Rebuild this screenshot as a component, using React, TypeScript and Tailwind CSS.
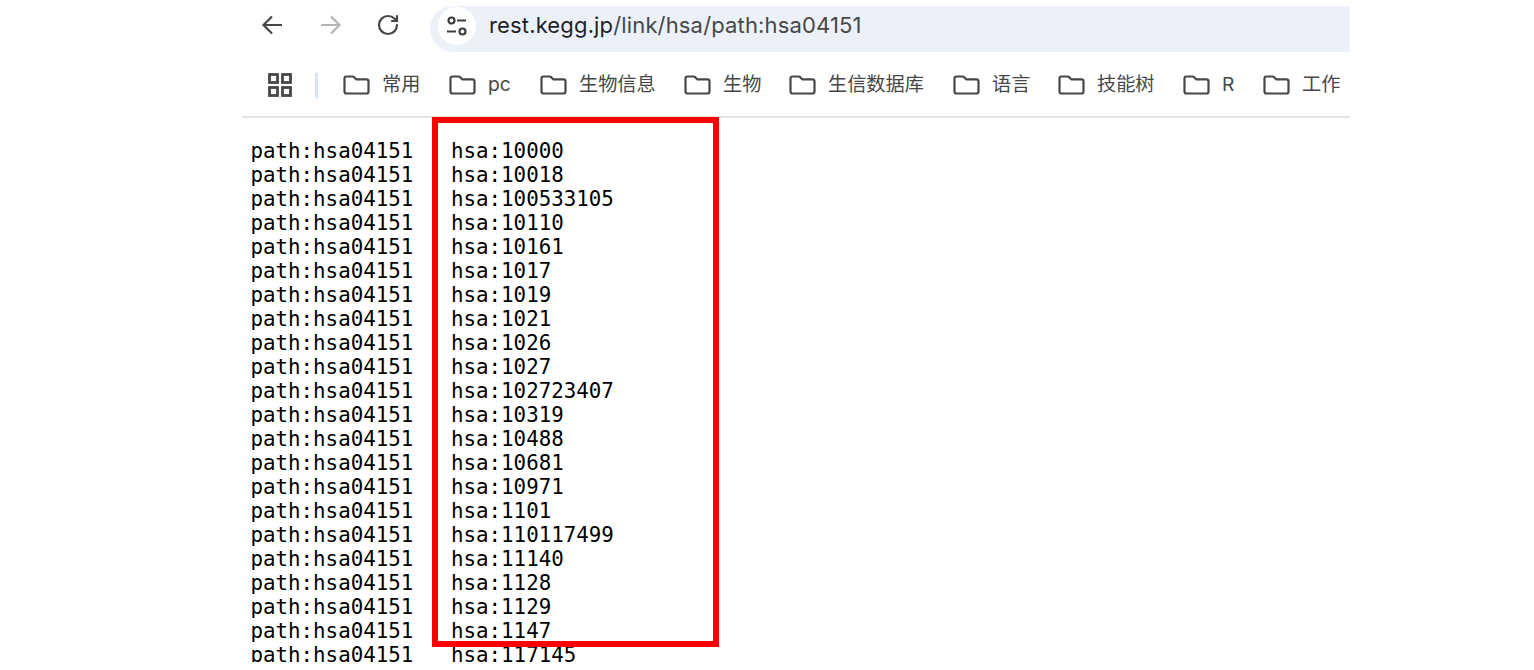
import { RotateCw } from "lucide-react";

const bookmarks = [
  { name: "常用", width: "w-[106px]" },
  { name: "pc", width: "w-[91px]" },
  { name: "生物信息", width: "w-[144px]" },
  { name: "生物", width: "w-[105px]" },
  { name: "生信数据库", width: "w-[164px]" },
  { name: "语言", width: "w-[105px]" },
  { name: "技能树", width: "w-[125px]" },
  { name: "R", width: "w-[80px]" },
  { name: "工作", width: "w-[80px]" },
];

const genes = [
  "10000", "10018", "100533105", "10110", "10161", "1017", "1019", "1021", "1026", "1027", "102723407",
  "10319", "10488", "10681", "10971", "1101", "110117499", "11140", "1128", "1129", "1147", "117145",
];

function FolderIcon() {
  return (
    <svg width="27" height="20" viewBox="0 0 27 20" fill="none" className="shrink-0 text-[#474747]">
      <path
        d="M1.500 3.500C1.500 2.400 2.400 1.500 3.500 1.500h6.100c.5 0 1 .2 1.400.6l2.100 2.200h10.400c1.100 0 2 .9 2 2v10.200c0 1.100-.9 2-2 2H3.500c-1.100 0-2-.9-2-2V3.500Z"
        stroke="currentColor"
        strokeWidth="2.200"
        strokeLinejoin="round"
      />
    </svg>
  );
}

function TuneIcon() {
  return (
    <svg width="24" height="24" viewBox="0 0 24 24" fill="none" className="text-[#3c3c3c]">
      <circle cx="6.500" cy="6.500" r="3" stroke="currentColor" strokeWidth="2.200" />
      <path d="M12 6.500h9M2 17.500h9" stroke="currentColor" strokeWidth="2.200" />
      <circle cx="17.500" cy="17.500" r="3" stroke="currentColor" strokeWidth="2.200" />
    </svg>
  );
}

function AppsIcon() {
  return (
    <svg width="24" height="24" viewBox="0 0 24 24" fill="none" className="shrink-0 text-[#474747]">
      <rect x="1.500" y="1.500" width="8" height="8" stroke="currentColor" strokeWidth="2.800" />
      <rect x="14.500" y="1.500" width="8" height="8" stroke="currentColor" strokeWidth="2.800" />
      <rect x="1.500" y="14.500" width="8" height="8" stroke="currentColor" strokeWidth="2.800" />
      <rect x="14.500" y="14.500" width="8" height="8" stroke="currentColor" strokeWidth="2.800" />
    </svg>
  );
}

function NavArrow({ flip, className }: { flip?: boolean; className?: string }) {
  return (
    <svg width="24" height="24" viewBox="0 0 24 24" fill="none" className={`shrink-0 ${flip ? "-scale-x-100" : ""} ${className ?? ""}`}>
      <path d="M12 3.500 3.500 12l8.500 8.500M3.500 12H22" stroke="currentColor" strokeWidth="2.200" />
    </svg>
  );
}

export default function App() {
  return (
    <div className="h-[670px] w-[1534px] overflow-hidden bg-white font-['Inter','Noto_Sans_CJK_SC',sans-serif]">
      <div className="relative ml-[242px] h-[662px] w-[1108px] overflow-hidden">
        <div className="flex h-[60px] items-start pt-[6px]">
          <div className="flex h-[46px] w-[188px] items-start pt-[7px] pl-[18px] text-[#474747]">
            <NavArrow />
            <NavArrow flip className="ml-[35px] text-[#b4b4b4]" />
            <RotateCw size={24} strokeWidth={2.200} className="ml-[33px] shrink-0" />
          </div>
          <div className="flex h-[46px] flex-1 items-start rounded-l-[23px] bg-[#ecf1f9] pt-[1px] pl-[8px]">
            <div className="flex h-[38px] items-center">
              <div className="flex h-[38px] w-[38px] items-center justify-center rounded-full bg-white">
                <TuneIcon />
              </div>
              <span className="mb-[2px] ml-[13px] text-[22px] tracking-[0.15px] text-[#1f1f1f]">
                rest.kegg.jp<span className="text-[#474747]">/link/hsa/path:hsa04151</span>
              </span>
            </div>
          </div>
        </div>

        <div className="flex h-[58px] items-center border-b-2 border-[#e4e4e4] pb-[6px] pl-[26px]">
          <AppsIcon />
          <div className="ml-[23px] mr-[25px] h-[25px] w-[3px] shrink-0 bg-[#d3e3fd]" />
          {bookmarks.map((b) => (
            <div key={b.name} className={`flex shrink-0 items-center ${b.width}`}>
              <FolderIcon />
              <span className="mb-[2px] ml-[12px] text-[19.200px] whitespace-nowrap text-[#474747]">{b.name}</span>
            </div>
          ))}
        </div>

        <pre className="mt-[21px] ml-[8.500px] font-['DejaVu_Sans_Mono',monospace] text-[20.800px] leading-[24px] text-black">
          {genes.map((g) => (
            <div key={g} className="flex">
              <span className="w-[200.500px]">path:hsa04151</span>
              <span>hsa:{g}</span>
            </div>
          ))}
        </pre>

        <div className="absolute top-[117px] left-[190px] h-[530px] w-[287px] border-[6px] border-[#fe0000]" />
      </div>
    </div>
  );
}
